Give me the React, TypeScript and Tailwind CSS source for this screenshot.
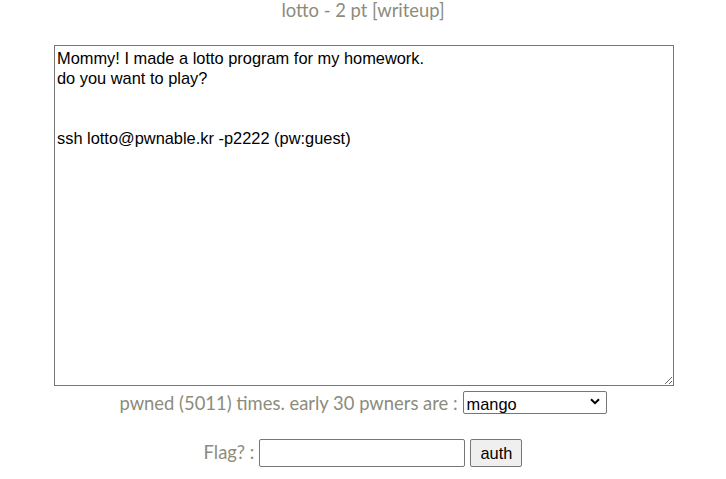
export default function App() {
  const pwners = ["mango", "jh", "kanghee", "daehee"];

  return (
    <div className="flex min-h-screen flex-col items-center bg-white font-['Lato',sans-serif] text-[#8c8c7c]">
      <div className="h-[20px] text-[18.4px] leading-[20px]">lotto - 2 pt [writeup]</div>

      <textarea
        readOnly
        className="ml-[2px] mt-[25px] h-[341px] w-[620px] border border-[#767676] px-[2px] py-[2px] font-['Liberation_Sans',Arial,sans-serif] text-[16.4px] leading-[20px] text-black outline-none"
        defaultValue={
          "Mommy! I made a lotto program for my homework.\ndo you want to play?\n\n\nssh lotto@pwnable.kr -p2222 (pw:guest)"
        }
      />

      <div className="mt-[6px] flex h-[23px] items-center gap-[5px] text-[18.4px]">
        <span>pwned (5011) times. early 30 pwners are :</span>
        <div className="relative">
          <select className="h-[23px] w-[144px] appearance-none rounded-[2px] border border-[#767676] bg-white pl-[3px] font-['Liberation_Sans',Arial,sans-serif] text-[16.4px] text-black outline-none">
            {pwners.map((p) => (
              <option key={p}>{p}</option>
            ))}
          </select>
          <svg
            className="pointer-events-none absolute right-[7px] top-[8px] h-[7px] w-[10px]"
            viewBox="0 0 10 7"
            fill="none"
            stroke="black"
            strokeWidth="2"
          >
            <path d="M1 1.2l4 4 4-4" />
          </svg>
        </div>
      </div>

      <div className="mt-[24px] flex h-[28px] items-center text-[18.4px]">
        <span>Flag? :</span>
        <input
          type="text"
          className="ml-[5px] h-[28px] w-[206px] rounded-[2px] border border-[#767676] bg-white px-[2px] font-['Liberation_Sans',Arial,sans-serif] text-[16px] text-black outline-none"
        />
        <button className="ml-[5px] h-[28px] w-[52px] rounded-[2px] border border-[#767676] bg-[#efefef] font-['Liberation_Sans',Arial,sans-serif] text-[16.4px] text-black">
          auth
        </button>
      </div>
    </div>
  );
}
